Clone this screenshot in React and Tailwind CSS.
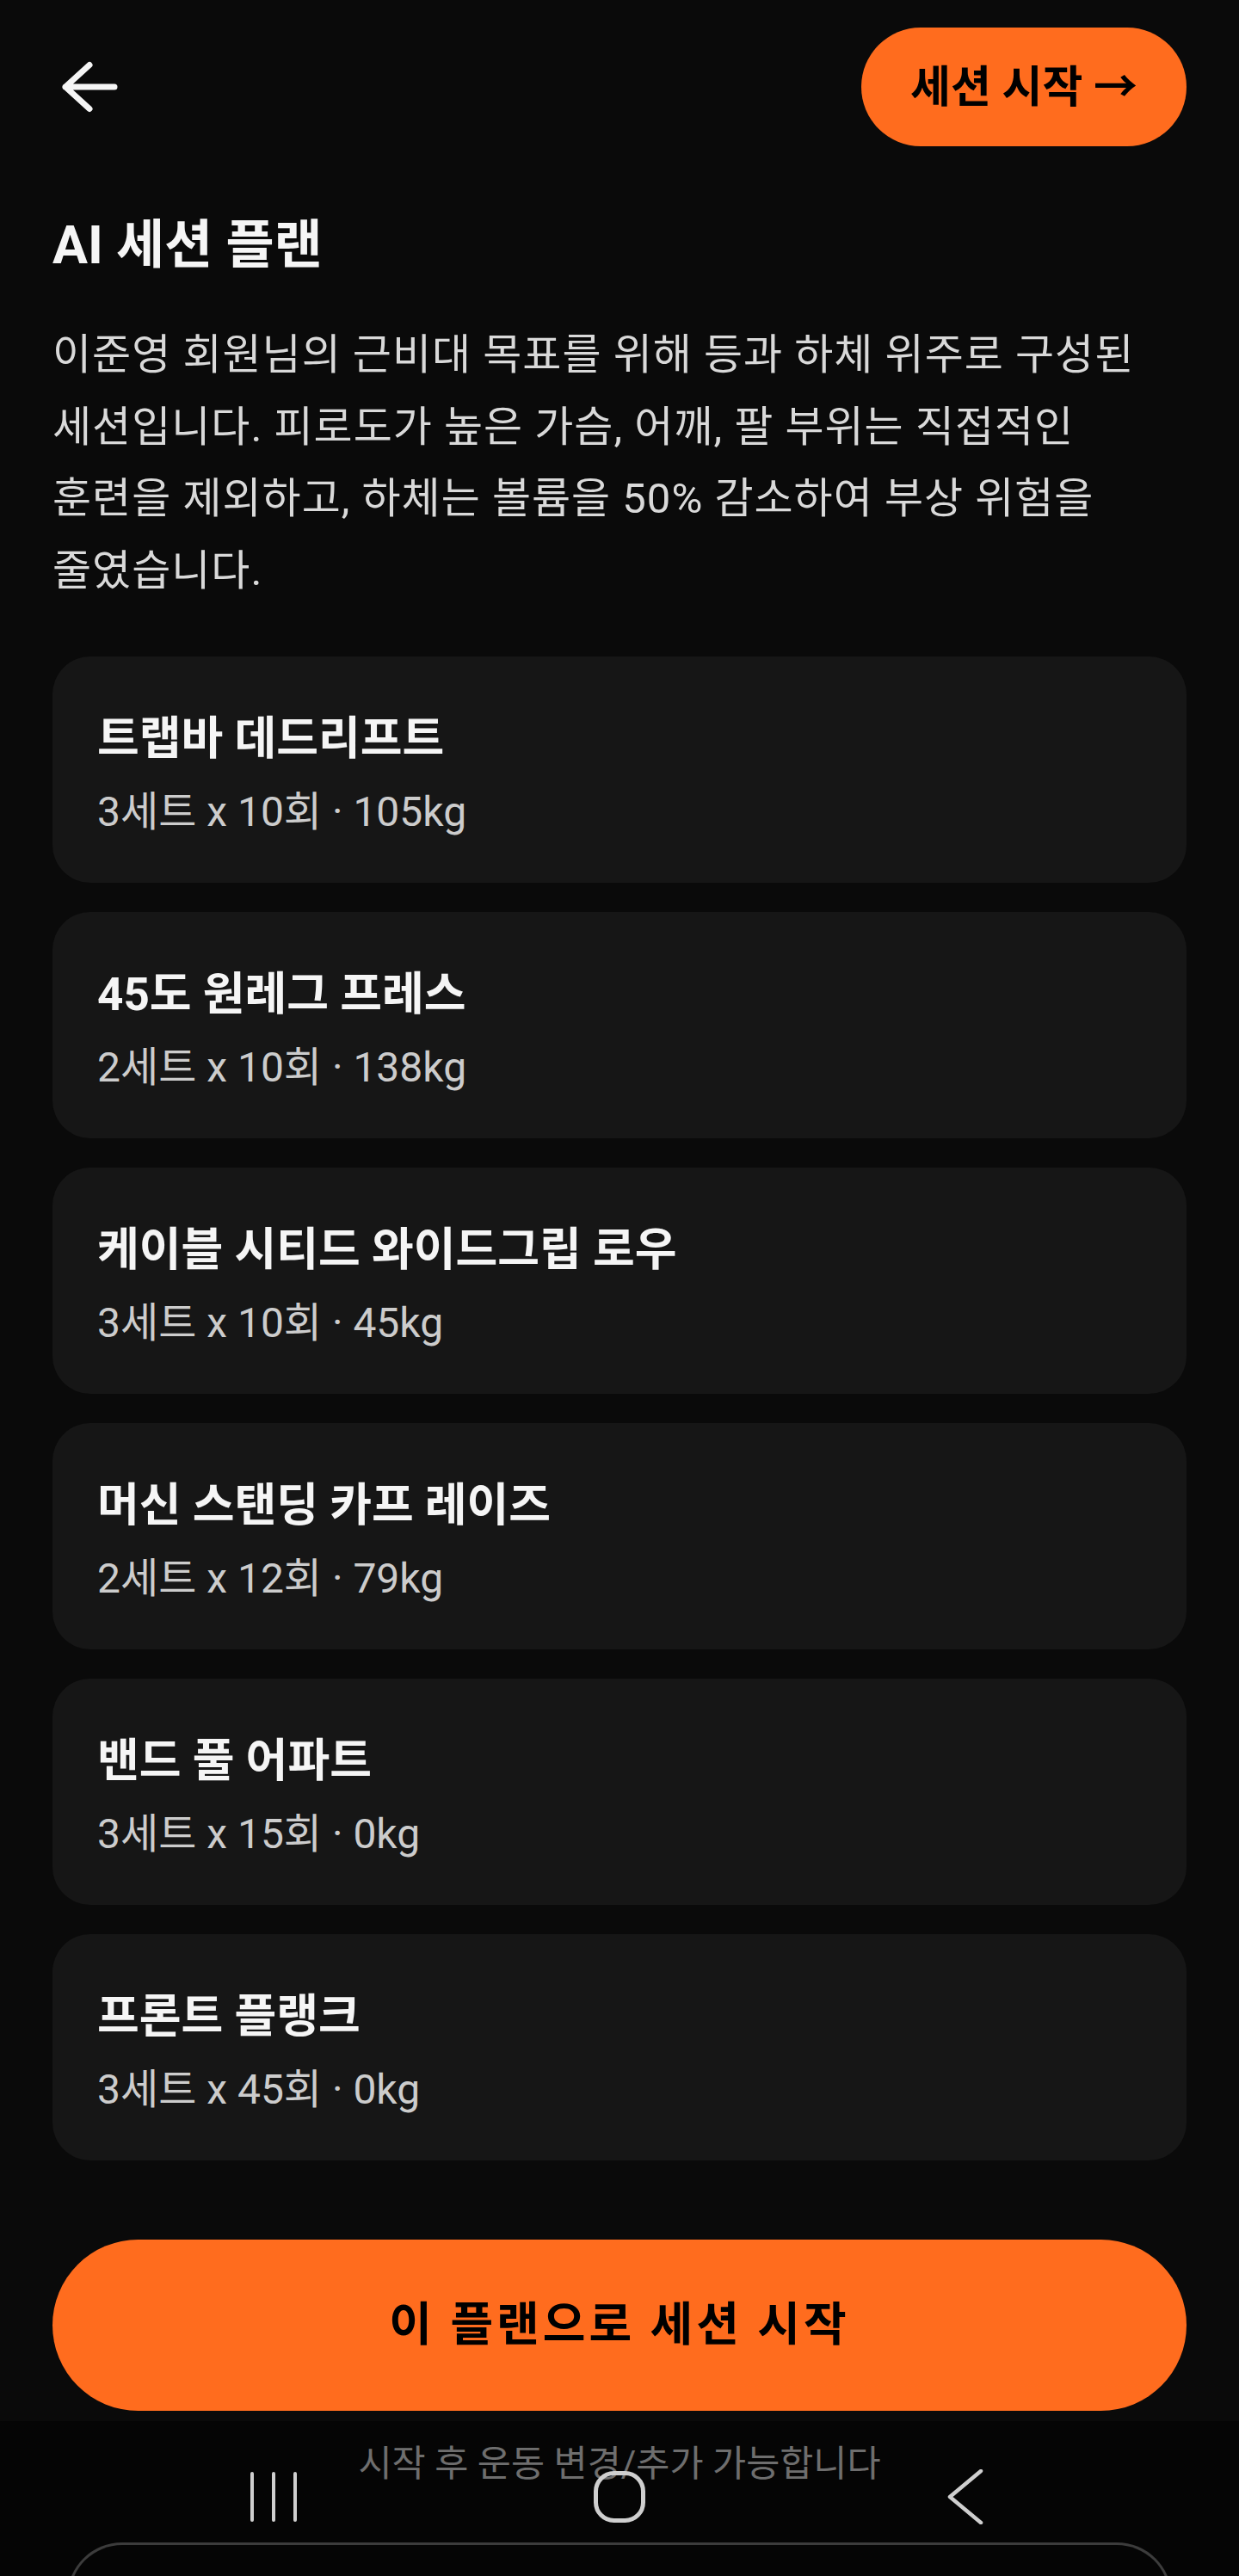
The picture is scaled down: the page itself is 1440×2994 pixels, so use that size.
import React from "react";

const exercises = [
  { name: "트랩바 데드리프트", detail: "3세트 x 10회 · 105kg" },
  { name: "45도 원레그 프레스", detail: "2세트 x 10회 · 138kg" },
  { name: "케이블 시티드 와이드그립 로우", detail: "3세트 x 10회 · 45kg" },
  { name: "머신 스탠딩 카프 레이즈", detail: "2세트 x 12회 · 79kg" },
  { name: "밴드 풀 어파트", detail: "3세트 x 15회 · 0kg" },
  { name: "프론트 플랭크", detail: "3세트 x 45회 · 0kg" },
];

export default function App() {
  return (
    <div className="relative min-h-[2994px] h-[2994px] overflow-hidden bg-[#0a0a0a] font-['Roboto','Noto_Sans_CJK_KR',sans-serif]">
      <div className="px-[61px]">
        {/* Header */}
        <div className="flex items-center justify-between pt-[32px]">
          <svg className="ml-[7px]" width="70" height="66" viewBox="0 0 70 66" fill="none">
            <path d="M36 7.5 L8 33 L36 58.5 M8 33 H65" stroke="#f5f5f5" strokeWidth="7" strokeLinecap="round" strokeLinejoin="round" />
          </svg>
          <button className="flex h-[138px] w-[378px] items-center justify-center rounded-full bg-[#ff6c1e] text-[51px] font-bold leading-none text-black">
            세션 시작 →
          </button>
        </div>

        {/* Title */}
        <h1 className="mt-[80px] text-[61px] font-bold leading-[70px] text-[#f5f5f5]">AI 세션 플랜</h1>

        {/* Description */}
        <p className="mt-[51px] break-keep pr-[18px] text-[49px] leading-[83.5px] tracking-[1px] text-[#d9d9d9]">
          이준영 회원님의 근비대 목표를 위해 등과 하체 위주로 구성된 세션입니다. 피로도가 높은 가슴, 어깨, 팔 부위는 직접적인 훈련을 제외하고, 하체는 볼륨을 50% 감소하여 부상 위험을 줄였습니다.
        </p>

        {/* Exercise cards */}
        <div className="mt-[58px] flex flex-col gap-[34px]">
          {exercises.map((ex) => (
            <div key={ex.name} className="flex h-[263px] flex-col gap-[27px] rounded-[44px] bg-[#161616] px-[52px] pt-[66px]">
              <div className="text-[53px] font-bold leading-[60px] text-[#f5f5f5]">{ex.name}</div>
              <div className="text-[48px] leading-[56px] text-[#cccccc]">{ex.detail}</div>
            </div>
          ))}
        </div>

        {/* Main CTA */}
        <button className="mt-[92px] flex h-[199px] w-full items-center justify-center rounded-full bg-[#ff6c1e] text-[54px] font-bold leading-none tracking-[4px] text-black">
          이 플랜으로 세션 시작
        </button>

        <p className="mt-[37px] text-center text-[42.5px] leading-[50px] text-[#dcdcdc]">시작 후 운동 변경/추가 가능합니다</p>

        <div className="mx-[17px] mt-[66px] h-[120px] rounded-t-[64px] border-[3px] border-b-0 border-[#787878]"></div>
      </div>

      {/* System navigation bar overlay */}
      <div className="absolute bottom-0 left-0 right-0 top-[2814px] bg-black/50">
        <div className="absolute left-[117px] top-[58px] flex h-[60px] items-center">
          <div className="flex w-[402px] justify-center">
            <svg width="56" height="60" viewBox="0 0 56 60" fill="none">
              <path d="M3 3 V57 M28 3 V57 M53 3 V57" stroke="#cfcfcf" strokeWidth="4" strokeLinecap="round" />
            </svg>
          </div>
          <div className="flex w-[402px] justify-center">
            <svg width="62" height="62" viewBox="0 0 62 62" fill="none">
              <rect x="3.5" y="3.5" width="55" height="55" rx="21" stroke="#cfcfcf" strokeWidth="5" />
            </svg>
          </div>
          <div className="flex w-[402px] justify-center">
            <svg width="44" height="64" viewBox="0 0 44 64" fill="none">
              <path d="M40 2 L4 32 L40 62" stroke="#cfcfcf" strokeWidth="4.5" strokeLinecap="round" strokeLinejoin="round" />
            </svg>
          </div>
        </div>
      </div>
    </div>
  );
}
